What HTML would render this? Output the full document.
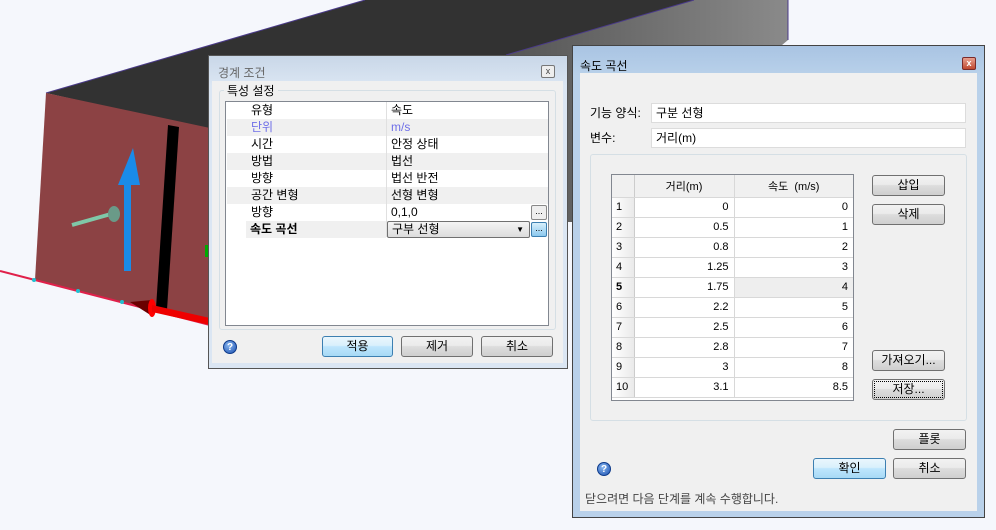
<!DOCTYPE html>
<html><head><meta charset="utf-8"><style>
*{margin:0;padding:0;box-sizing:border-box}
body{width:996px;height:530px;background:#f5f7fc;position:relative;overflow:hidden;font-family:"Liberation Sans","Noto Sans CJK KR",sans-serif;font-size:12px;color:#000}
.a{position:absolute}
.btn{position:absolute;height:21px;border:1px solid #707070;border-radius:3px;background:linear-gradient(#f2f2f2 0%,#ebebeb 45%,#dddddd 50%,#cfcfcf 100%);text-align:center;line-height:19px;font-size:12px}
.blue{border-color:#3c7fb1;background:linear-gradient(#eaf6fd 0%,#d9f0fc 45%,#bee6fd 50%,#a7d9f5 100%)}
.help{position:absolute;width:14px;height:14px;border-radius:50%;background:radial-gradient(circle at 40% 35%,#8ab8f0,#1a4fb0);color:#fff;font-size:10px;font-weight:bold;text-align:center;line-height:14px;border:1px solid #0d3a8a}
.row{position:absolute;left:1px;width:321px;height:17px;line-height:17px}
.row span{position:absolute}
.g{background:#f0f0f0}
td{border-right:1px solid #d8d8d8;border-bottom:1px solid #d8d8d8;height:20px;padding:0 5px;font-size:11px;text-align:right}
td.n{background:linear-gradient(90deg,#fff,#eaeaea);text-align:left;padding-left:4px;border-right:1px solid #ccc}
</style></head><body>
<svg class="a" style="left:0;top:0" width="996" height="530">
<defs><linearGradient id="sg" x1="0" x2="1"><stop offset="0" stop-color="#555"/><stop offset="1" stop-color="#8a8a8a"/></linearGradient></defs>
<polygon points="46,93 365,0 694,0 506,55 560,230 210,130" fill="#323232"/>
<polygon points="694,0 788,0 788,40 572,222 560,222 506,55" fill="url(#sg)"/>
<line x1="46" y1="93" x2="365" y2="0" stroke="#4a3a8a" stroke-width="1"/>
<line x1="506" y1="55" x2="694" y2="0" stroke="#4a3a8a"/>
<line x1="788" y1="0" x2="788" y2="40" stroke="#4a3a8a"/>
<polygon points="46,93 210,128 210,325 35,280" fill="#8c4244"/>
<polygon points="168,125 179,127 167,310 156,308" fill="#000"/>
<line x1="0" y1="271" x2="35" y2="280" stroke="#e0204a" stroke-width="2"/>
<line x1="35" y1="280" x2="210" y2="325" stroke="#e0204a" stroke-width="2"/>
<circle cx="34" cy="280" r="2" fill="#20c0d0"/><circle cx="78" cy="291" r="2" fill="#20c0d0"/><circle cx="122" cy="302" r="2" fill="#20c0d0"/>
<polygon points="130,302 152,300 152,316" fill="#6a0000"/>
<ellipse cx="152" cy="308" rx="4" ry="9" fill="#f00"/>
<polygon points="152,305 210,318 210,325 152,312" fill="#e00"/>
<rect x="124" y="185" width="7" height="86" fill="#1a8be8"/>
<polygon points="133,148 118,185 140,185" fill="#1a8be8"/>
<line x1="72" y1="225" x2="118" y2="212" stroke="#7fc8a8" stroke-width="4"/>
<ellipse cx="114" cy="214" rx="6" ry="8" fill="#6a9a88"/>
<rect x="205" y="245" width="3" height="12" fill="#0a0"/>
</svg>

<!-- left dialog -->
<div class="a" style="left:208px;top:55px;width:360px;height:314px;background:linear-gradient(#c9d7e8,#dbe6f3 30px);border:1px solid #555"></div>
<div class="a" style="left:218px;top:64px;color:#666;font-size:12px">경계 조건</div>
<div class="a" style="left:541px;top:65px;width:14px;height:13px;border:1px solid #777;border-radius:2px;background:#eee;font-size:9px;line-height:11px;text-align:center;color:#444">x</div>
<div class="a" style="left:212px;top:81px;width:351px;height:282px;background:#f0f0f0"></div>
<div class="a" style="left:219px;top:90px;width:337px;height:240px;border:1px solid #d5dfe5;border-radius:3px"></div>
<div class="a" style="left:224px;top:82px;background:#f0f0f0;padding:0 3px;font-size:12px">특성 설정</div>
<div class="a" style="left:225px;top:101px;width:324px;height:225px;background:#fff;border:1px solid #828790">
<div class="row" style="top:0"><span style="left:24px">유형</span><span style="left:164px">속도</span></div>
<div class="row g" style="top:17px;color:#6f6fe8"><span style="left:24px">단위</span><span style="left:164px">m/s</span></div>
<div class="row" style="top:34px"><span style="left:24px">시간</span><span style="left:164px">안정 상태</span></div>
<div class="row g" style="top:51px"><span style="left:24px">방법</span><span style="left:164px">법선</span></div>
<div class="row" style="top:68px"><span style="left:24px">방향</span><span style="left:164px">법선 반전</span></div>
<div class="row g" style="top:85px"><span style="left:24px">공간 변형</span><span style="left:164px">선형 변형</span></div>
<div class="row" style="top:102px"><span style="left:24px">방향</span><span style="left:164px">0,1,0</span></div>
<div class="row g" style="top:119px;left:20px;width:140px;font-weight:bold"><span style="left:4px">속도 곡선</span></div>
<div class="a" style="left:160px;top:0;width:1px;height:135px;background:#e0e0e0"></div>
<div class="a" style="left:305px;top:103px;width:16px;height:15px;border:1px solid #888;border-radius:2px;background:#eee;font-size:9px;line-height:10px;text-align:center">...</div>
<div class="a" style="left:161px;top:119px;width:143px;height:17px;border:1px solid #707070;border-radius:2px;background:linear-gradient(#f4f4f4,#dcdcdc);line-height:15px;padding-left:4px">구부 선형<span style="position:absolute;right:5px;font-size:8px">▼</span></div>
<div class="a" style="left:305px;top:120px;width:16px;height:15px;border:1px solid #3c7fb1;border-radius:2px;background:linear-gradient(#d9f0fc,#8cc8ee);font-size:9px;line-height:10px;text-align:center">...</div>
</div>
<div class="help" style="left:223px;top:340px">?</div>
<div class="btn blue" style="left:322px;top:336px;width:71px">적용</div>
<div class="btn" style="left:401px;top:336px;width:72px">제거</div>
<div class="btn" style="left:481px;top:336px;width:72px">취소</div>

<!-- right dialog -->
<div class="a" style="left:572px;top:45px;width:413px;height:473px;background:linear-gradient(#a9c4e3,#b9d1ea 30px);border:1px solid #444"></div>
<div class="a" style="left:580px;top:57px;font-size:12px">속도 곡선</div>
<div class="a" style="left:962px;top:57px;width:14px;height:13px;border:1px solid #7a2a2a;border-radius:2px;background:linear-gradient(#e8a090,#c04830);color:#fff;font-size:9px;line-height:11px;text-align:center;font-weight:bold">x</div>
<div class="a" style="left:580px;top:73px;width:397px;height:438px;background:#f0f0f0"></div>
<div class="a" style="left:590px;top:104px">기능 양식:</div>
<div class="a" style="left:651px;top:103px;width:315px;height:20px;background:#fff;border:1px solid #dcdcdc;padding-left:4px;line-height:18px">구분 선형</div>
<div class="a" style="left:590px;top:129px">변수:</div>
<div class="a" style="left:651px;top:128px;width:315px;height:20px;background:#fff;border:1px solid #dcdcdc;padding-left:4px;line-height:18px">거리(m)</div>
<div class="a" style="left:590px;top:154px;width:377px;height:267px;border:1px solid #d5dfe5;border-radius:3px"></div>
<div class="a" style="left:611px;top:174px;width:243px;height:227px;background:#fff;border:1px solid #828790;overflow:hidden">
<table style="border-collapse:collapse;width:242px">
<tr><td class="n" style="width:22px;height:22px;background:#f0f0f0"></td><td style="width:100px;text-align:center;height:22px;background:#f0f0f0">거리(m)</td><td style="text-align:center;background:#f0f0f0">속도 &nbsp;(m/s)</td></tr>
<tr><td class="n">1</td><td>0</td><td>0</td></tr>
<tr><td class="n">2</td><td>0.5</td><td>1</td></tr>
<tr><td class="n">3</td><td>0.8</td><td>2</td></tr>
<tr><td class="n">4</td><td>1.25</td><td>3</td></tr>
<tr><td class="n" style="font-weight:bold">5</td><td>1.75</td><td style="background:#eee">4</td></tr>
<tr><td class="n">6</td><td>2.2</td><td>5</td></tr>
<tr><td class="n">7</td><td>2.5</td><td>6</td></tr>
<tr><td class="n">8</td><td>2.8</td><td>7</td></tr>
<tr><td class="n">9</td><td>3</td><td>8</td></tr>
<tr><td class="n">10</td><td>3.1</td><td>8.5</td></tr>
</table></div>
<div class="btn" style="left:872px;top:175px;width:73px">삽입</div>
<div class="btn" style="left:872px;top:204px;width:73px">삭제</div>
<div class="btn" style="left:872px;top:350px;width:73px">가져오기...</div>
<div class="btn" style="left:872px;top:379px;width:73px;outline:1px dotted #000;outline-offset:-3px">저장...</div>
<div class="btn" style="left:893px;top:429px;width:73px">플롯</div>
<div class="btn blue" style="left:813px;top:458px;width:73px">확인</div>
<div class="btn" style="left:893px;top:458px;width:73px">취소</div>
<div class="help" style="left:597px;top:462px">?</div>
<div class="a" style="left:585px;top:490px;color:#444">닫으려면 다음 단계를 계속 수행합니다.</div>
</body></html>
